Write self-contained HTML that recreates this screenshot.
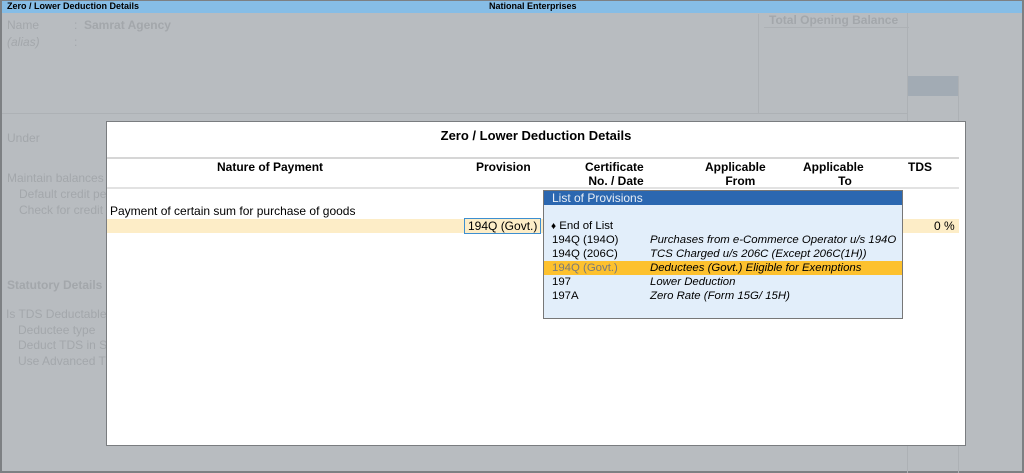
<!DOCTYPE html>
<html><head><style>
*{margin:0;padding:0;box-sizing:border-box}
body{width:1024px;height:473px;overflow:hidden;background:#b8bcc0;font-family:"Liberation Sans",Arial,sans-serif;font-size:12px;position:relative}
.a{position:absolute;white-space:nowrap}
.f{color:#a3a7ab}
.b{font-weight:bold}
.p{font-size:11.4px;line-height:14px}
</style></head><body>
<div class="a" style="left:0;top:0;width:1024px;height:473px;border:2px solid #7d8083;border-top:1px solid #7d8083"></div>
<div class="a" style="left:2px;top:1px;width:1020px;height:12px;background:#86bde6"></div>
<div class="a b" style="left:7px;top:1px;font-size:9px">Zero / Lower Deduction Details</div>
<div class="a b" style="left:489px;top:1px;font-size:9px">National Enterprises</div>
<div class="a f" style="left:7px;top:18px">Name</div>
<div class="a f" style="left:74px;top:18px">:</div>
<div class="a f b" style="left:84px;top:18px">Samrat Agency</div>
<div class="a f" style="left:7px;top:35px;font-style:italic">(alias)</div>
<div class="a f" style="left:74px;top:35px">:</div>
<div class="a" style="left:2px;top:113px;width:905px;height:1px;background:#adb1b5"></div>
<div class="a" style="left:758px;top:14px;width:1px;height:99px;background:#adb1b5"></div>
<div class="a" style="left:764px;top:27px;width:145px;height:1px;background:#adb1b5"></div>
<div class="a f b" style="left:769px;top:13px">Total Opening Balance</div>
<div class="a" style="left:907px;top:13px;width:1px;height:460px;background:#adb1b5"></div>
<div class="a" style="left:958px;top:76px;width:1px;height:397px;background:#adb1b5"></div>
<div class="a" style="left:908px;top:76px;width:50px;height:20px;background:#a2abb4"></div>
<div class="a f" style="left:7px;top:131px">Under</div>
<div class="a f" style="left:7px;top:171px">Maintain balances b</div>
<div class="a f" style="left:19px;top:187px">Default credit peri</div>
<div class="a f" style="left:19px;top:203px">Check for credit d</div>
<div class="a f b" style="left:7px;top:278px">Statutory Details</div>
<div class="a f" style="left:6px;top:307px">Is TDS Deductable</div>
<div class="a f" style="left:18px;top:323px">Deductee type</div>
<div class="a f" style="left:18px;top:338px">Deduct TDS in Sa</div>
<div class="a f" style="left:18px;top:354px">Use Advanced TD</div>

<div class="a" style="left:106px;top:121px;width:860px;height:325px;background:#fff;border:1px solid #7a7d80"></div>
<div class="a b" style="left:107px;top:128px;width:858px;text-align:center;font-size:13px">Zero / Lower Deduction Details</div>
<div class="a" style="left:107px;top:157px;width:852px;height:2px;background:#d6d6d6"></div>
<div class="a" style="left:107px;top:187px;width:852px;height:2px;background:#e2e2e2"></div>
<div class="a b" style="left:217px;top:160px">Nature of Payment</div>
<div class="a b" style="left:476px;top:160px">Provision</div>
<div class="a b" style="left:585px;top:160px;text-align:right;line-height:14px">Certificate<br>No. / Date</div>
<div class="a b" style="left:705px;top:160px;text-align:center;line-height:14px">Applicable<br>&nbsp;&nbsp;&nbsp;From</div>
<div class="a b" style="left:803px;top:160px;text-align:center;line-height:14px">Applicable<br>&nbsp;&nbsp;&nbsp;&nbsp;&nbsp;&nbsp;&nbsp;To</div>
<div class="a b" style="left:908px;top:160px">TDS</div>
<div class="a" style="left:110px;top:204px">Payment of certain sum for purchase of goods</div>
<div class="a" style="left:107px;top:219px;width:852px;height:14px;background:#fdedc7"></div>
<div class="a" style="left:934px;top:219px">0 %</div>
<div class="a" style="left:464px;top:218px;width:77px;height:16px;border:1px solid #3d8fd0;background:#fdedc7;padding-left:3px;line-height:14px">194Q (Govt.)</div>

<div class="a" style="left:543px;top:190px;width:360px;height:129px;background:#e2eefa;border:1px solid #777"></div>
<div class="a" style="left:544px;top:191px;width:358px;height:14px;background:#2b67b0;color:#e8eef6;padding-left:8px;line-height:14px">List of Provisions</div>
<div class="a" style="left:544px;top:261px;width:358px;height:14px;background:#fdc12e"></div>
<div class="a p" style="left:551px;top:219px"><span style="font-size:10px">&#9830;</span> End of List</div>
<div class="a p" style="left:552px;top:233px">194Q (194O)</div>
<div class="a p" style="left:650px;top:233px;font-style:italic">Purchases from e-Commerce Operator u/s 194O</div>
<div class="a p" style="left:552px;top:247px">194Q (206C)</div>
<div class="a p" style="left:650px;top:247px;font-style:italic">TCS Charged u/s 206C (Except 206C(1H))</div>
<div class="a p" style="left:552px;top:261px;color:#7a7a7a">194Q (Govt.)</div>
<div class="a p" style="left:650px;top:261px;font-style:italic">Deductees (Govt.) Eligible for Exemptions</div>
<div class="a p" style="left:552px;top:275px">197</div>
<div class="a p" style="left:650px;top:275px;font-style:italic">Lower Deduction</div>
<div class="a p" style="left:552px;top:289px">197A</div>
<div class="a p" style="left:650px;top:289px;font-style:italic">Zero Rate (Form 15G/ 15H)</div>
</body></html>
